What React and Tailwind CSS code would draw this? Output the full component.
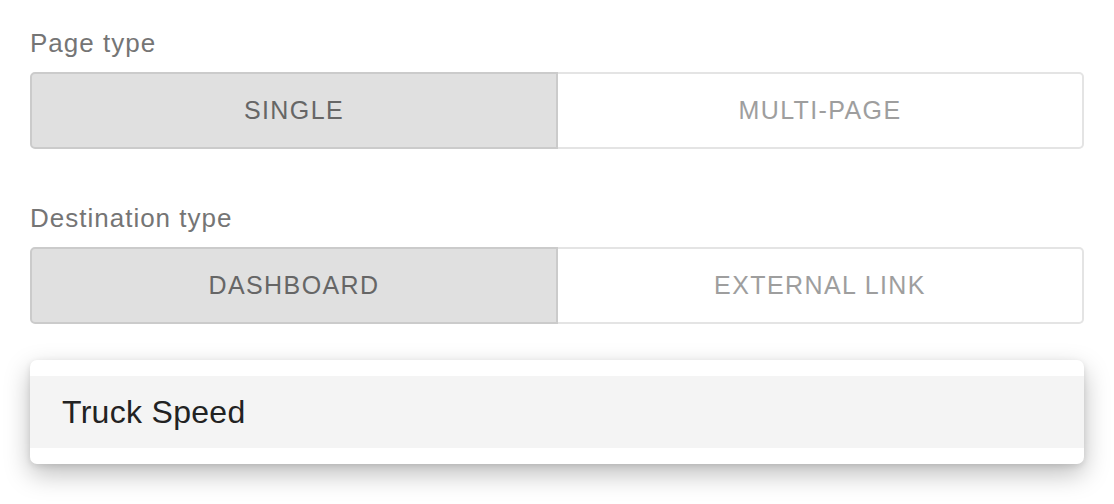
import { useState } from 'react';

const font = { fontFamily: '"Liberation Sans", Arial, sans-serif' };

function Segmented({ options, value, onChange }) {
  return (
    <div className="flex h-[77px]">
      {options.map((opt, i) => {
        const active = opt === value;
        const first = i === 0;
        return (
          <button
            key={opt}
            onClick={() => onChange(opt)}
            className={`flex-1 flex items-center justify-center text-[25px] tracking-[1.4px] uppercase ${
              first ? 'rounded-l-[5px]' : 'rounded-r-[5px]'
            } ${
              active
                ? 'bg-[#e0e0e0] text-[#666666] border-2 border-[#cbcbcb]'
                : `bg-white text-[#9e9e9e] border-2 border-[#e4e4e4] ${first ? 'border-r-0' : 'border-l-0'}`
            }`}
          >
            {opt}
          </button>
        );
      })}
    </div>
  );
}

export default function App() {
  const [pageType, setPageType] = useState('Single');
  const [destType, setDestType] = useState('Dashboard');

  return (
    <div className="min-h-screen bg-white px-[30px] pt-[27px]" style={font}>
      <div className="text-[26px] leading-[32px] tracking-[1px] text-[#757575]">Page type</div>
      <div className="mt-[13px]">
        <Segmented options={['Single', 'Multi-page']} value={pageType} onChange={setPageType} />
      </div>

      <div className="mt-[53px] text-[26px] leading-[32px] tracking-[1px] text-[#757575]">Destination type</div>
      <div className="mt-[13px]">
        <Segmented options={['Dashboard', 'External link']} value={destType} onChange={setDestType} />
      </div>

      <div className="mt-[36px] bg-white rounded-[7px] py-[16px] shadow-[0_10px_26px_rgba(0,0,0,0.26),0_2px_6px_rgba(0,0,0,0.1)]">
        <div className="h-[72px] bg-[#f4f4f4] flex items-center pl-[32px] text-[32px] tracking-[0.3px] text-[#222222]">
          Truck Speed
        </div>
      </div>
    </div>
  );
}
